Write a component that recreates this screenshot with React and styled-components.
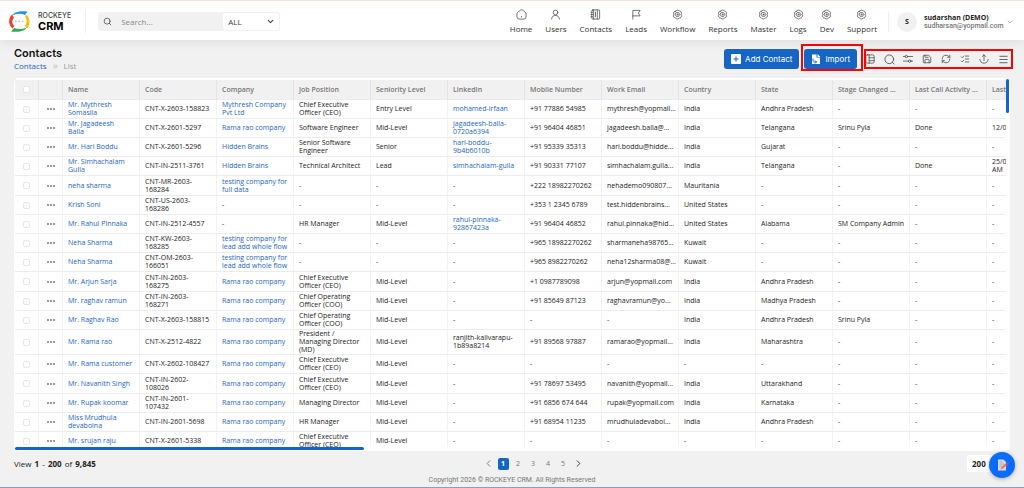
import React from 'react';
import styled, { createGlobalStyle } from 'styled-components';
import { ChevronDown, ChevronLeft, ChevronRight, ChevronsRight, ListChecks, Menu, RefreshCw, Save, Search } from 'lucide-react';

const columns = [
  'Name', 'Code', 'Company', 'Job Position', 'Seniority Level', 'LinkedIn', 'Mobile Number',
  'Work Email', 'Country', 'State', 'Stage Changed ...', 'Last Call Activity ...', 'Last',
];

const CEO = 'Chief Executive\nOfficer (CEO)';
const COO = 'Chief Operating\nOfficer (COO)';
const RAMA = 'Rama rao company';
const WHOLE_FLOW = 'testing company for\nlead add whole flow';

const contacts = [
  ['Mr. Mythresh\nSomasila', 'CNT-X-2603-158823', 'Mythresh Company\nPvt Ltd', CEO, 'Entry Level', 'mohamed-irfaan', '+91 77886 54985', 'mythresh@yopmail...', 'India', 'Andhra Pradesh', '-', '-', '-'],
  ['Mr. Jagadeesh\nBalla', 'CNT-X-2601-5297', RAMA, 'Software Engineer', 'Mid-Level', 'jagadeesh-balla-\n0720a6394', '+91 96404 46851', 'jagadeesh.balla@...', 'India', 'Telangana', 'Srinu Pyla', 'Done', '12/07'],
  ['Mr. Hari Boddu', 'CNT-X-2601-5296', 'Hidden Brains', 'Senior Software\nEngineer', 'Senior', 'hari-boddu-\n9b4b6010b', '+91 95339 35313', 'hari.boddu@hidde...', 'India', 'Gujarat', '-', '-', '-'],
  ['Mr. Simhachalam\nGulla', 'CNT-IN-2511-3761', 'Hidden Brains', 'Technical Architect', 'Lead', 'simhachalam-gulla', '+91 90331 77107', 'simhachalam.gulla...', 'India', 'Telangana', '-', 'Done', '25/09\nAM'],
  ['neha sharma', 'CNT-MR-2603-\n168284', 'testing company for\nfull data', '-', '-', '-', '+222 18982270262', 'nehademo090807...', 'Mauritania', '-', '-', '-', '-'],
  ['Krish Soni', 'CNT-US-2603-\n168286', '-', '-', '-', '-', '+353 1 2345 6789', 'test.hiddenbrains...', 'United States', '-', '-', '-', '-'],
  ['Mr. Rahul Pinnaka', 'CNT-IN-2512-4557', '-', 'HR Manager', 'Mid-Level', 'rahul-pinnaka-\n92867423a', '+91 96404 46852', 'rahul.pinnaka@hid...', 'United States', 'Alabama', 'SM Company Admin', '-', '-'],
  ['Neha Sharma', 'CNT-KW-2603-\n168285', WHOLE_FLOW, '-', '-', '-', '+965 18982270262', 'sharmaneha98765...', 'Kuwait', '-', '-', '-', '-'],
  ['Neha Sharma', 'CNT-OM-2603-\n166051', WHOLE_FLOW, '-', '-', '-', '+965 8982270262', 'neha12sharma08@...', 'Kuwait', '-', '-', '-', '-'],
  ['Mr. Arjun Sarja', 'CNT-IN-2603-\n168275', RAMA, CEO, 'Mid-Level', '-', '+1 0987789098', 'arjun@yopmail.com', 'India', 'Andhra Pradesh', '-', '-', '-'],
  ['Mr. raghav ramun', 'CNT-IN-2603-\n168271', RAMA, COO, 'Mid-Level', '-', '+91 85649 87123', 'raghavramun@yo...', 'India', 'Madhya Pradesh', '-', '-', '-'],
  ['Mr. Raghav Rao', 'CNT-X-2603-158815', RAMA, COO, 'Mid-Level', '-', '-', '-', 'India', 'Andhra Pradesh', 'Srinu Pyla', '-', '-'],
  ['Mr. Rama rao', 'CNT-X-2512-4822', RAMA, 'President /\nManaging Director\n(MD)', 'Mid-Level', 'ranjith-kalivarapu-\n1b89a8214', '+91 89568 97887', 'ramarao@yopmail...', 'India', 'Maharashtra', '-', '-', '-'],
  ['Mr. Rama customer', 'CNT-X-2602-108427', RAMA, CEO, 'Mid-Level', '-', '-', '-', '-', '-', '-', '-', '-'],
  ['Mr. Navanith Singh', 'CNT-IN-2602-\n108026', RAMA, CEO, 'Mid-Level', '-', '+91 78697 53495', 'navanith@yopmail...', 'India', 'Uttarakhand', '-', '-', '-'],
  ['Mr. Rupak koomar', 'CNT-IN-2601-\n107432', RAMA, 'Managing Director', 'Mid-Level', '-', '+91 6856 674 644', 'rupak@yopmail.com', 'India', 'Karnataka', '-', '-', '-'],
  ['Miss Mrudhula\ndevaboina', 'CNT-IN-2601-5698', RAMA, 'HR Manager', 'Mid-Level', '-', '+91 68954 11235', 'mrudhuladevaboi...', 'India', 'Andhra Pradesh', '-', '-', '-'],
  ['Mr. srujan raju', 'CNT-X-2601-5338', RAMA, CEO, 'Mid-Level', '-', '-', '-', '-', '-', '-', '-', '-'],
];

// name, company and linkedin values are links, except plain-text profiles
const isLink = (value, col) =>
  value !== '-' && (col === 0 || col === 2 || (col === 5 && !value.startsWith('ranjith')));

function Icon({ size = 11, children }) {
  return (
    <svg width={size} height={size} viewBox="0 0 24 24" fill="none" stroke="currentColor" strokeWidth="1.8" strokeLinecap="round" strokeLinejoin="round" aria-hidden="true">
      {children}
    </svg>
  );
}

const HomeIcon = () => (
  <Icon>
    <path d="M2 11C2 9 3 8 4 7l5-4c2-1.500 4-1.500 6 0l5 4c1 1 2 2 2 4v6a5 5 0 0 1-5 5H7a5 5 0 0 1-5-5z" />
    <path d="M12 16v1.500" />
  </Icon>
);

const UserIcon = () => (
  <Icon>
    <circle cx="12" cy="7.500" r="5" />
    <path d="M3.500 22c.5-5 3.500-8 8.500-8s8 3 8.500 8" />
  </Icon>
);

const BookIcon = () => (
  <Icon>
    <rect x="4" y="2" width="17" height="20" rx="2" />
    <path d="M8 2v20M16 2v20M2 7h4M2 12h4M2 17h4M12 7v10" />
  </Icon>
);

const FlagIcon = () => (
  <Icon>
    <path d="M4 22V3h16l-4 6 4 6H4" />
  </Icon>
);

const GearIcon = () => (
  <Icon>
    <path d="M8 4.500C9.500 1.500 14.500 1.500 16 4.500c3.500-.3 6 3.700 4 7.500 2 3.800-.5 7.800-4 7.500-1.500 3-6.500 3-8 0-3.500.3-6-3.700-4-7.500-2-3.800.5-7.800 4-7.500z" />
    <path d="M9.500 8h5l2.500 4-2.500 4h-5L7 12z" />
    <circle cx="12" cy="12" r="1" />
  </Icon>
);

const ColumnsIcon = () => (
  <Icon size={10}>
    <rect x="2" y="2" width="20" height="20" rx="4" />
    <path d="M10 2v20M10 9h12M10 16h12" />
  </Icon>
);

const ZoomIcon = () => (
  <Icon size={11}>
    <circle cx="11.500" cy="11.500" r="9.500" />
    <path d="M18.500 18.500L22 22" />
  </Icon>
);

const FilterIcon = () => (
  <Icon size={10}>
    <path d="M1 6h4M11 6h12M1 17h12M19 17h4" />
    <circle cx="8" cy="6" r="3" />
    <circle cx="16" cy="17" r="3" />
  </Icon>
);

const AnchorIcon = () => (
  <Icon size={10}>
    <path d="M12 16V2M8 6l4-4 4 4M2 13c0 5 4 9 10 9s10-4 10-9" />
  </Icon>
);

const Logo = () => (
  <svg width="23" height="23" viewBox="0 0 46 46" fill="none" role="img" aria-label="Rockeye">
    <path d="M7 12C13 4 22 1 39 3L34 10C25 6 16 7 7 12z" fill="#2196e3" />
    <path d="M36 9c9 8 9 20 2 28l-4-6c5-6 4-13 0-17z" fill="#fbbc05" />
    <path d="M39 34C33 42 24 45 6 43l6-7c9 3 18 3 27-2z" fill="#34a853" />
    <path d="M9 37C0 29 0 17 8 9l4 6c-5 6-4 13 1 17z" fill="#ea4335" />
    <path d="M14 23h3M21 23h3M28 23h3" stroke="#b8bec6" strokeWidth="3" />
  </svg>
);

const navItems = [
  ['Home', HomeIcon], ['Users', UserIcon], ['Contacts', BookIcon], ['Leads', FlagIcon],
  ['Workflow', GearIcon], ['Reports', GearIcon], ['Master', GearIcon], ['Logs', GearIcon],
  ['Dev', GearIcon], ['Support', GearIcon],
];

const tools = [
  ['Columns', <ColumnsIcon />],
  ['Search', <ZoomIcon />],
  ['Filter', <FilterIcon />],
  ['Save view', <Save size={10} strokeWidth={1.8} />],
  ['Refresh', <RefreshCw size={10} strokeWidth={1.8} />],
  ['Checklist', <ListChecks size={10} strokeWidth={1.8} />],
  ['Anchor', <AnchorIcon />],
  ['Menu', <Menu size={11} strokeWidth={1.8} />],
];

function TopBar() {
  return (
    <Header>
      <Brand href="#home">
        <Logo />
        <BrandText>
          <span>ROCKEYE</span>
          <strong>CRM</strong>
        </BrandText>
      </Brand>
      <SearchBar>
        <Search size={9} strokeWidth={2} />
        <input type="text" placeholder="Search..." aria-label="Search" />
        <SearchScope>
          <select aria-label="Search in">
            <option>ALL</option>
          </select>
          <ChevronDown size={9} strokeWidth={3} />
        </SearchScope>
      </SearchBar>
      <Nav>
        {navItems.map(([label, NavIcon]) => (
          <a href={`#${label.toLowerCase()}`} key={label}>
            <NavIcon />
            {label}
          </a>
        ))}
      </Nav>
      <Profile type="button">
        <Avatar>S</Avatar>
        <ProfileText>
          <strong>sudarshan (DEMO)</strong>
          <span>sudharsan@yopmail.com</span>
        </ProfileText>
        <ChevronDown size={8} strokeWidth={1.5} />
      </Profile>
    </Header>
  );
}

function PageHead() {
  return (
    <Head>
      <div>
        <Title>Contacts</Title>
        <Crumbs>
          <a href="#contacts">Contacts</a>
          <ChevronsRight size={7} />
          <span>List</span>
        </Crumbs>
      </div>
      <Actions>
        <PrimaryButton type="button">
          <svg width="10" height="10" viewBox="0 0 10 10" aria-hidden="true">
            <rect width="10" height="10" rx="1" fill="#fff" />
            <path d="M5 2.500v5M2.500 5h5" stroke="#1665c5" />
          </svg>
          Add Contact
        </PrimaryButton>
        <Highlight>
          <PrimaryButton type="button">
            <svg width="10" height="10" viewBox="0 0 20 20" aria-hidden="true">
              <path d="M2 1h9v6h7v13H2z" fill="#fff" />
              <path d="M13 0l6 6h-6z" fill="#fff" />
              <path d="M4 9v4c0 2 1 3 3 3h4M8 13l3 3-3 3" fill="none" stroke="#1665c5" strokeWidth="2" />
            </svg>
            Import
          </PrimaryButton>
        </Highlight>
        <Tools>
          {tools.map(([label, icon]) => (
            <button type="button" aria-label={label} key={label}>{icon}</button>
          ))}
        </Tools>
      </Actions>
    </Head>
  );
}

function ContactsTable() {
  return (
    <Card>
      <Scroller>
        <Table>
          <thead>
            <tr>
              <PickHead><input type="checkbox" aria-label="Select all" /></PickHead>
              <PickHead />
              {columns.map((name) => <th key={name}>{name}</th>)}
            </tr>
          </thead>
          <tbody>
            {contacts.map((row) => (
              <tr key={row[1]}>
                <PickCell><input type="checkbox" aria-label={`Select ${row[0]}`} /></PickCell>
                <PickCell><RowMenu type="button" aria-label="Row actions"><i /><i /><i /></RowMenu></PickCell>
                {row.map((value, col) => (
                  <td key={columns[col]}>
                    {isLink(value, col) ? <a href="#contact">{value}</a> : value}
                  </td>
                ))}
              </tr>
            ))}
          </tbody>
        </Table>
      </Scroller>
      <VerticalBar />
      <HorizontalBar />
    </Card>
  );
}

function App() {
  return (
    <Page>
      <GlobalStyle />
      <TopBar />
      <PageHead />
      <ContactsTable />
      <Footer>
        <Range>View <b>1</b> - <b>200</b> of <b>9,845</b></Range>
        <Pager aria-label="Pages">
          <PageButton type="button" aria-label="Previous"><ChevronLeft size={11} /></PageButton>
          <PageButton type="button" $active>1</PageButton>
          {[2, 3, 4, 5].map((n) => <PageButton type="button" key={n}>{n}</PageButton>)}
          <PageButton type="button" aria-label="Next" $dark><ChevronRight size={11} /></PageButton>
        </Pager>
        <PageSize aria-label="Rows per page"><option>200</option></PageSize>
      </Footer>
      <Copyright>Copyright 2026 © ROCKEYE CRM. All Rights Reserved</Copyright>
      <Fab type="button" aria-label="Notes">
        <svg width="12" height="12" viewBox="0 0 24 24" aria-hidden="true">
          <path d="M4 1h11l5 5v17H4z" fill="#d5d9ea" />
          <path d="M7 6h6M7 10h9M7 14h5" stroke="#a9aec8" strokeWidth="2" />
          <path d="M9 21l2-5 8-7 3 3-8 7z" fill="#f4743b" />
          <path d="M19 9l2-2 3 3-2 2z" fill="#e84a5f" />
        </svg>
      </Fab>
    </Page>
  );
}

export default App;

const GlobalStyle = createGlobalStyle`
  * {
    box-sizing: border-box;
  }

  body {
    margin: 0;
    background: #f1f1f1;
    color: #222;
    font-family: "Open Sans", "Noto Sans", sans-serif;
    font-size: 7px;
    font-weight: 500;
  }

  button, input, select {
    margin: 0;
    padding: 0;
    border: 0;
    background: none;
    color: inherit;
    font: inherit;
  }

  a {
    color: #1b66c4;
    text-decoration: none;
  }

  input[type='checkbox'] {
    appearance: none;
    display: block;
    width: 7px;
    height: 7px;
    margin: 0 auto;
    border: 1px solid #e6e6e6;
    border-radius: 2px;
    background: #fff;
  }
`;

const Page = styled.div`
  display: flex;
  flex-direction: column;
  height: 100vh;
  border-bottom: 1px solid #8b9dc3;
`;

const Header = styled.header`
  display: flex;
  align-items: center;
  flex: none;
  height: 40px;
  padding: 2px 10px 0 8px;
  border-top: 1px solid #fbe3df;
  background: #fff;
  box-shadow: 0 2px 10px rgba(0, 0, 0, 0.08);
`;

const Brand = styled.a`
  display: flex;
  align-items: center;
  gap: 7px;
  padding-right: 14px;
  border-right: 1px solid #eee;
  color: #000;
`;

const BrandText = styled.div`
  display: flex;
  flex-direction: column;
  font-family: Inter, sans-serif;

  span {
    color: #444;
    font-size: 7px;
    line-height: 9px;
  }

  strong {
    font-size: 11px;
    line-height: 12px;
  }
`;

const SearchBar = styled.div`
  display: flex;
  align-items: center;
  width: 182px;
  height: 19px;
  margin-left: 12px;
  padding: 1px 1px 1px 5px;
  border-radius: 3px;
  background: #f1f1f1;
  color: #444;

  input {
    flex: 1;
    min-width: 0;
    margin-left: 9px;
    outline: 0;
    font-size: 8px;
  }

  input::placeholder {
    color: #888;
  }
`;

const SearchScope = styled.label`
  display: flex;
  align-items: center;
  width: 56px;
  height: 17px;
  padding: 0 4px 0 5px;
  border-radius: 3px;
  background: #fff;

  select {
    flex: 1;
    appearance: none;
    font-size: 8px;
  }
`;

const Nav = styled.nav`
  display: flex;
  gap: 13px;
  margin-left: auto;

  a {
    display: flex;
    flex-direction: column;
    align-items: center;
    gap: 4px;
    color: #333;
    font-size: 8px;
    line-height: 10px;
  }

  svg {
    color: #555;
  }
`;

const Profile = styled.button`
  display: flex;
  align-items: center;
  margin-left: 11px;
  padding-left: 8px;
  border-left: 1px solid #eee;
  color: #777;
  text-align: left;
`;

const Avatar = styled.span`
  display: grid;
  place-items: center;
  width: 20px;
  height: 20px;
  margin-right: 7px;
  border-radius: 50%;
  background: #f1f1f1;
  color: #222;
  font-weight: 700;
`;

const ProfileText = styled.span`
  display: flex;
  flex-direction: column;
  width: 82px;
  line-height: 8px;

  strong {
    color: #222;
  }

  span {
    font-family: Roboto, sans-serif;
  }
`;

const Head = styled.div`
  display: flex;
  justify-content: space-between;
  flex: none;
  height: 38px;
  padding: 6px 11px 0 14px;
`;

const Title = styled.h1`
  margin: 0;
  color: #111;
  font-family: Inter, sans-serif;
  font-size: 11px;
  font-weight: 600;
  line-height: 14px;
`;

const Crumbs = styled.div`
  display: flex;
  align-items: center;
  gap: 5px;
  color: #999;
  font-size: 8px;
  line-height: 12px;
`;

const Actions = styled.div`
  display: flex;
  align-items: center;
  align-self: flex-start;
  height: 26px;
  gap: 5px;
`;

const PrimaryButton = styled.button`
  display: flex;
  align-items: center;
  gap: 4px;
  height: 20px;
  padding: 0 7px;
  border-radius: 3px;
  background: #1665c5;
  color: #fff;
  font-family: Inter, sans-serif;
  font-size: 8px;
  font-weight: 400;
  white-space: nowrap;
`;

const Highlight = styled.div`
  position: relative;

  &::after {
    content: '';
    position: absolute;
    inset: -5px -6px -2px -3px;
    border: 2px solid #f00;
    pointer-events: none;
  }
`;

const Tools = styled.div`
  position: relative;
  display: flex;
  align-items: center;
  gap: 9px;
  height: 20px;
  margin-left: 2px;
  padding: 0 5px 0 1px;
  color: #444;

  &::after {
    content: '';
    position: absolute;
    inset: 0;
    border: 2px solid #f00;
    pointer-events: none;
  }

  button {
    display: grid;
    place-items: center;
    width: 10px;
    height: 12px;
  }
`;

const Card = styled.main`
  position: relative;
  flex: 1;
  min-height: 0;
  margin: 0 14px;
  padding: 2px 4px 4px 1px;
  border-radius: 5px;
  background: #fff;
`;

const Scroller = styled.div`
  height: 100%;
  overflow: hidden;
`;

const Table = styled.table`
  width: 1049px;
  border-collapse: separate;
  border-spacing: 0;
  table-layout: fixed;

  th, td {
    height: 19px;
    padding: 0 5px;
    border-right: 1px solid #f2f2f2;
    border-bottom: 1px solid #ececec;
    line-height: 8px;
    text-align: left;
    white-space: pre;
  }

  tbody tr:nth-child(5n) td {
    height: 20px;
  }

  th {
    height: 20px;
    border-right-color: #e4e4e4;
    background: #f1f1f1;
    color: #777;
    font-weight: 600;
  }
`;

const PickHead = styled.th`
  width: 24px;
`;

const PickCell = styled.td`
  width: 24px;
`;

const RowMenu = styled.button`
  display: flex;
  gap: 1px;
  margin: 0 auto;
  padding: 3px 0;

  i {
    width: 2px;
    height: 2px;
    border-radius: 50%;
    background: #777;
  }
`;

const VerticalBar = styled.div`
  position: absolute;
  top: 1px;
  right: 1px;
  width: 3px;
  height: 34px;
  border-radius: 2px;
  background: #1665c5;
`;

const HorizontalBar = styled.div`
  position: absolute;
  bottom: 1px;
  left: 1px;
  width: 35%;
  height: 3px;
  border-radius: 2px;
  background: #1665c5;
`;

const Footer = styled.footer`
  display: grid;
  grid-template-columns: 1fr auto 1fr;
  align-items: center;
  flex: none;
  height: 25px;
  padding: 0 14px;
`;

const Range = styled.div`
  font-size: 8px;
  white-space: pre;

  b {
    margin: 0 1px;
  }
`;

const Pager = styled.nav`
  display: flex;
  gap: 4px;
  padding-left: 42px;
`;

const PageButton = styled.button`
  display: grid;
  place-items: center;
  width: 11px;
  height: 12px;
  border-radius: 2px;
  background: ${({ $active }) => ($active ? '#1665c5' : 'none')};
  color: ${({ $active, $dark }) => ($active ? '#fff' : $dark ? '#333' : '#777')};
  font-weight: ${({ $active }) => ($active ? 700 : 500)};
`;

const PageSize = styled.select`
  appearance: none;
  justify-self: end;
  width: 43px;
  height: 17px;
  padding-left: 5px;
  border-radius: 2px;
  background: #fff;
  font-size: 8px;
  font-weight: 700;
`;

const Copyright = styled.div`
  flex: none;
  height: 11px;
  color: #777;
  font-family: Roboto, sans-serif;
  font-weight: 400;
  line-height: 8px;
  text-align: center;
`;

const Fab = styled.button`
  position: fixed;
  right: 9px;
  bottom: 10px;
  display: grid;
  place-items: center;
  width: 26px;
  height: 26px;
  border-radius: 50%;
  background: #0a6cff;
  box-shadow: 0 1px 4px rgba(0, 0, 0, 0.3);
`;
